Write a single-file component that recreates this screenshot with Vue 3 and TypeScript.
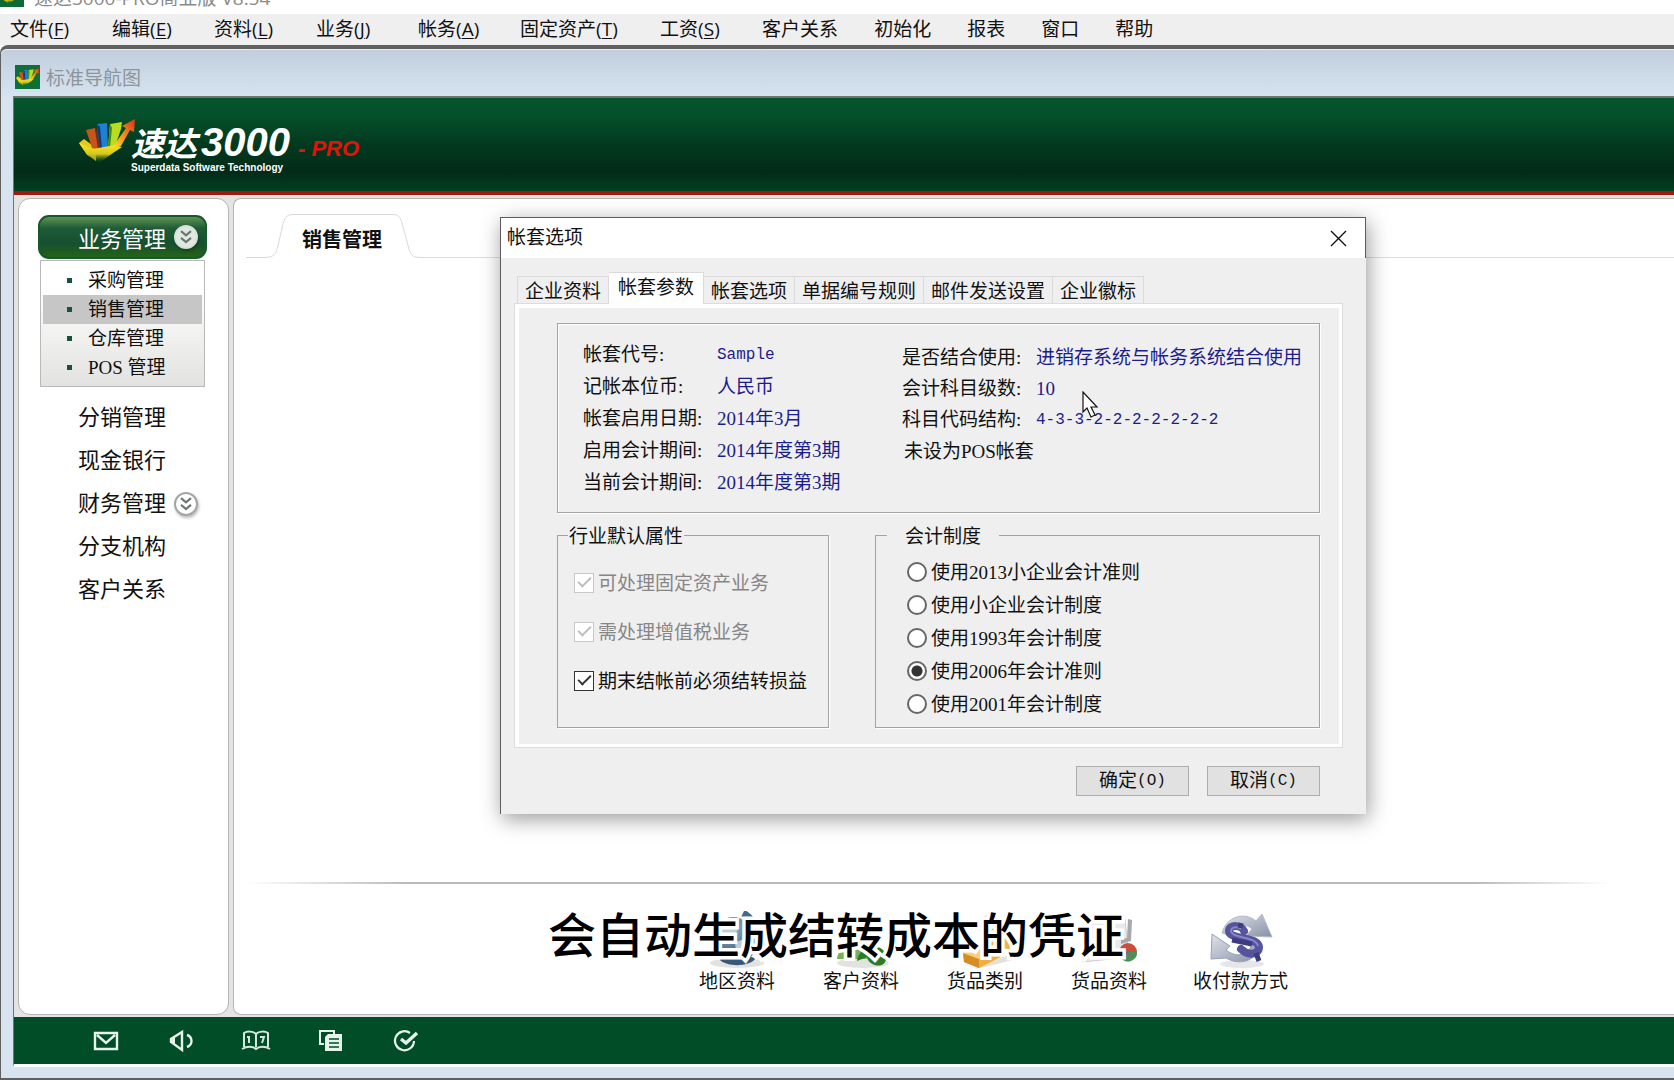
<script setup lang="ts">
import { ref } from 'vue'

interface MenuEntry { label: string; key?: string }
interface Choice { id: string; label: string; disabled?: boolean }
interface Field { label: string; value: string; mono?: boolean }

const menus: MenuEntry[] = [
  { label: '文件', key: 'F' },
  { label: '编辑', key: 'E' },
  { label: '资料', key: 'L' },
  { label: '业务', key: 'J' },
  { label: '帐务', key: 'A' },
  { label: '固定资产', key: 'T' },
  { label: '工资', key: 'S' },
  { label: '客户关系' },
  { label: '初始化' },
  { label: '报表' },
  { label: '窗口' },
  { label: '帮助' },
]

const subItems = ['采购管理', '销售管理', '仓库管理', 'POS 管理']
const activeSub = ref('销售管理')
const navItems = ['分销管理', '现金银行', '财务管理', '分支机构', '客户关系']

const tabs = ['企业资料', '帐套参数', '帐套选项', '单据编号规则', '邮件发送设置', '企业徽标']
const activeTab = ref('帐套参数')

const leftFields: Field[] = [
  { label: '帐套代号:', value: 'Sample', mono: true },
  { label: '记帐本位币:', value: '人民币' },
  { label: '帐套启用日期:', value: '2014年3月' },
  { label: '启用会计期间:', value: '2014年度第3期' },
  { label: '当前会计期间:', value: '2014年度第3期' },
]
const rightFields: Field[] = [
  { label: '是否结合使用:', value: '进销存系统与帐务系统结合使用' },
  { label: '会计科目级数:', value: '10' },
  { label: '科目代码结构:', value: '4-3-3-2-2-2-2-2-2-2', mono: true },
]

const checks: Choice[] = [
  { id: 'asset', label: '可处理固定资产业务', disabled: true },
  { id: 'vat', label: '需处理增值税业务', disabled: true },
  { id: 'carry', label: '期末结帐前必须结转损益' },
]
const checked = ref<string[]>(['asset', 'vat', 'carry'])

const systems: Choice[] = [
  { id: 's2013', label: '使用2013小企业会计准则' },
  { id: 'small', label: '使用小企业会计制度' },
  { id: 's1993', label: '使用1993年会计制度' },
  { id: 's2006', label: '使用2006年会计准则' },
  { id: 's2001', label: '使用2001年会计制度' },
]
const system = ref('s2006')
</script>

<template>
  <div class="app">
    <svg class="defs" width="0" height="0" aria-hidden="true">
      <defs>
        <linearGradient id="g-steel" x1="0" y1="0" x2="1" y2="1">
          <stop offset="0" stop-color="#dfe3ea" /><stop offset="1" stop-color="#8791a6" />
        </linearGradient>
        <linearGradient id="g-cup" x1="0" y1="0" x2="0" y2="1">
          <stop offset="0" stop-color="#f7e92a" /><stop offset=".55" stop-color="#d9c71a" /><stop offset="1" stop-color="#0c5a20" stop-opacity="0" />
        </linearGradient>
        <linearGradient id="g-arrow" x1="0" y1="1" x2="1" y2="0">
          <stop offset="0" stop-color="#f6e62a" /><stop offset=".5" stop-color="#f08a1c" /><stop offset="1" stop-color="#d8321a" />
        </linearGradient>
        <radialGradient id="g-globe" cx=".4" cy=".3" r=".8">
          <stop offset="0" stop-color="#9fbdd4" /><stop offset="1" stop-color="#2f5273" />
        </radialGradient>
        <symbol id="emblem" viewBox="0 0 56 44">
          <path d="M0 24 L5 20 L17 29 L17 42 L8 35 Z" fill="#e9c81c" />
          <path d="M7 11 L16 9 L20 31 L13 29 Z" fill="#c4561c" />
          <path d="M16 10 L19 12 L22 30 L19 31 Z" fill="#7c2c10" />
          <path d="M18 5 L28 4 L29 29 L21 30 Z" fill="#1f7fd0" />
          <path d="M18 5 L21 8 L23 30 L21 30 Z" fill="#0d3a80" />
          <path d="M31 5 L43 3 L42 10 L36 28 L29 28 Z" fill="#b9dc1e" />
          <path d="M31 5 L33 9 L31 28 L29 28 Z" fill="#3b8a1c" />
          <path d="M0 24 L14 30 L36 26 L43 28 L34 34 L20 44 L8 36 Z" fill="url(#g-cup)" />
          <path d="M33 29 L47 9 L43 7 L56 0 L55 13 L51 11 L42 27 Z" fill="url(#g-arrow)" />
        </symbol>
        <symbol id="chevrons" viewBox="0 0 24 24">
          <path d="M6 5 L12 10 L18 5 M6 13 L12 18 L18 13" fill="none" stroke="#6f7672" stroke-width="2.6" />
        </symbol>
      </defs>
    </svg>

    <header class="titlebar">
      <span class="title-icon"><svg width="22" height="20"><use href="#emblem" /></svg></span>
      <span class="title-text">速达3000-PRO商业版 V8.54</span>
    </header>

    <nav class="menubar">
      <button v-for="m in menus" :key="m.label" type="button">{{ m.label }}<span v-if="m.key" class="accel">(<u>{{ m.key }}</u>)</span></button>
    </nav>

    <section class="mdi">
      <div class="mdi-title">
        <span class="mdi-icon"><svg width="23" height="18"><use href="#emblem" /></svg></span>
        <span class="mdi-name">标准导航图</span>
      </div>

      <div class="mdi-body">
        <div class="banner">
          <svg class="logo" width="56" height="44"><use href="#emblem" /></svg>
          <div class="brand">
            <div class="brand-line">
              <span class="brand-cn">速达</span><span class="brand-num">3000</span><span class="brand-pro">- PRO</span>
            </div>
            <div class="brand-sub">Superdata Software Technology</div>
          </div>
        </div>

        <div class="workspace">
          <aside class="sidebar">
            <button type="button" class="nav-main">业务管理
              <span class="round pale"><svg width="20" height="20"><use href="#chevrons" /></svg></span>
            </button>
            <ul class="submenu">
              <li v-for="s in subItems" :key="s" :class="{ on: s === activeSub }">
                <button type="button" @click="activeSub = s">{{ s }}</button>
              </li>
            </ul>
            <ul class="nav-list">
              <li v-for="n in navItems" :key="n">
                <button type="button">{{ n }}
                  <span v-if="n === '财务管理'" class="round"><svg width="20" height="20"><use href="#chevrons" /></svg></span>
                </button>
              </li>
            </ul>
          </aside>

          <main class="stage">
            <div class="stage-tabs">
              <button type="button" class="stage-tab">
                <svg width="176" height="46" viewBox="0 0 176 46" aria-hidden="true">
                  <path d="M0 44.500 H18 C28 44.500 30 41 32 33 L37 11 C39 3 42 1.500 48 1.500 H146 C152 1.500 154 3 156 10 L163 36 C165 43 167 44.500 176 44.500" fill="none" stroke="#d9d9d9" />
                </svg>
                <span>销售管理</span>
              </button>
              <span class="stage-line"></span>
            </div>

            <div class="shortcuts-wrap">
              <hr />
              <div class="shortcuts">
                <button type="button">
                  <svg width="60" height="58" viewBox="0 0 60 58">
                    <ellipse cx="30" cy="52" rx="27" ry="5" fill="#e2e2e0" />
                    <path d="M36 2 C52 10 54 36 38 46" fill="none" stroke="#46698c" stroke-width="7" />
                    <circle cx="26" cy="25" r="19" fill="url(#g-globe)" />
                    <path d="M14 16 L24 10 L32 16 L27 26 L16 27 Z M28 31 L38 28 L36 38 L29 41 Z" fill="#b8cddd" />
                    <path d="M13 49 C20 42 40 42 48 48 C42 56 20 56 13 49 Z" fill="#375878" />
                  </svg>
                  地区资料
                </button>
                <button type="button">
                  <svg width="60" height="58" viewBox="0 0 60 58">
                    <ellipse cx="32" cy="52" rx="26" ry="5" fill="#e2e2e0" />
                    <circle cx="22" cy="20" r="11" fill="#cfe3c2" />
                    <path d="M6 48 C6 32 38 32 38 48 Z" fill="#76b259" />
                    <circle cx="42" cy="22" r="11" fill="#9fcb86" />
                    <path d="M26 50 C28 32 56 30 55 48 C54 58 38 56 36 46 Z" fill="#2f7a27" />
                  </svg>
                  客户资料
                </button>
                <button type="button">
                  <svg width="60" height="58" viewBox="0 0 60 58">
                    <path d="M18 56 L54 44 L58 49 L26 57 Z" fill="#e3e1dc" />
                    <path d="M20 10 L36 2 L34 16 L24 20 Z" fill="#f0bf62" />
                    <path d="M30 22 L44 14 L56 26 L54 42 L40 46 Z" fill="#f0b04a" />
                    <path d="M8 42 L22 32 L42 38 L46 46 L24 57 L9 51 Z" fill="#f2ae3e" />
                    <path d="M8 42 L24 48 L24 57 L9 51 Z" fill="#d88d22" />
                    <path d="M8 42 L22 32 L42 38 L24 48 Z" fill="#f9cd7c" />
                  </svg>
                  货品类别
                </button>
                <button type="button">
                  <svg width="60" height="58" viewBox="0 0 60 58">
                    <path d="M5 12 L46 8 L50 46 L4 51 Z" fill="#e9e9ec" stroke="#cccdd1" />
                    <path d="M49 8 L53 9 L52 30 L42 33 L42 28 L48 27 Z" fill="#a5a8af" />
                    <circle cx="49" cy="41" r="9" fill="#c94f3d" />
                    <path d="M49 41 L58 41 A9 9 0 0 1 44 49 Z" fill="#4c8f5c" />
                    <path d="M49 41 L44 49 A9 9 0 0 1 40 40 Z" fill="#4467a8" />
                  </svg>
                  货品资料
                </button>
                <button type="button">
                  <svg width="66" height="58" viewBox="0 0 66 58">
                    <ellipse cx="34" cy="53" rx="22" ry="4" fill="#e6e6ea" />
                    <path d="M14 22 C18 6 36 0 48 10 L54 3 L64 26 L38 25 L44 18 C36 11 26 13 22 24 Z" fill="url(#g-steel)" stroke="#b3bac8" />
                    <path d="M52 34 C50 48 34 56 18 47 L3 48 L4 23 L22 35 L18 39 C28 47 40 45 44 33 Z" fill="url(#g-steel)" stroke="#98a1b5" />
                    <path d="M36 20 C34 14 21 13 21 20 C21 29 50 25 51 36 C51 44 40 45 33 38" fill="none" stroke="#55549c" stroke-width="8" stroke-linecap="round" />
                    <path d="M33 18 C30 15 23 16 23 20 C24 28 48 25 50 35" fill="none" stroke="#8886cc" stroke-width="2" />
                    <path d="M24 29 L44 33 M33 12 L32 17 M48 42 L51 50" stroke="#3d3c82" stroke-width="5" />
                  </svg>
                  收付款方式
                </button>
              </div>
            </div>
          </main>
        </div>

        <footer class="dock">
          <button type="button" aria-label="邮件">
            <svg width="26" height="20" viewBox="0 0 26 20" fill="none" stroke="#e6f3ea" stroke-width="2.400"><path d="M2 2 H24 V18 H2 Z M4 4 L13 12 L22 4" /></svg>
          </button>
          <button type="button" aria-label="声音">
            <svg width="26" height="24" viewBox="0 0 26 24" fill="none" stroke="#e6f3ea" stroke-width="2.400"><path d="M14 3 L3 10 V13 L14 21 Z M19 6 C25 8 25 16 19 18" /><path d="M2 9 H7 V14 H2 Z" fill="#e6f3ea" stroke="none" /></svg>
          </button>
          <button type="button" aria-label="帮助手册">
            <svg width="30" height="22" viewBox="0 0 30 22" fill="none" stroke="#d5e8dc" stroke-width="2"><path d="M15 4 C12 1 6 1 3 3 V17 M15 4 C18 1 24 1 27 3 V17 M15 4 V17 M1 19 C6 16 12 16 15 19 C18 16 24 16 29 19 M8 6 V13 M6 7 H8 M19 7 H23 L21 13" /></svg>
          </button>
          <button type="button" aria-label="单据">
            <svg width="26" height="24" viewBox="0 0 26 24"><path d="M6 15 H2 V2 H16 V5" fill="none" stroke="#e6f3ea" stroke-width="2" /><path d="M7 8 L10 5 H24 V22 H7 Z" fill="#e6f3ea" /><path d="M11 10 H21 M11 14 H21 M11 18 H21" stroke="#004d28" stroke-width="1.500" /></svg>
          </button>
          <button type="button" aria-label="完成">
            <svg width="26" height="24" viewBox="0 0 26 24" fill="none" stroke="#e6f3ea"><path d="M17 4 A9.500 9.500 0 1 0 21 12" stroke-width="2.200" /><path d="M8 10 L13 14 L24 4" stroke-width="3.400" /></svg>
          </button>
        </footer>
      </div>
    </section>

    <section class="dialog" role="dialog" aria-label="帐套选项">
      <div class="dialog-title">
        <span>帐套选项</span>
        <button type="button" aria-label="关闭">
          <svg width="17" height="17" viewBox="0 0 17 17"><path d="M1 1 L16 16 M16 1 L1 16" stroke="#111" stroke-width="1.400" /></svg>
        </button>
      </div>
      <div class="dialog-tabs" role="tablist">
        <button v-for="t in tabs" :key="t" type="button" role="tab" :aria-selected="t === activeTab" :class="{ on: t === activeTab }" @click="activeTab = t">{{ t }}</button>
      </div>
      <div class="sheet">
        <div class="info">
          <dl class="fields left">
            <div v-for="f in leftFields" :key="f.label"><dt>{{ f.label }}</dt><dd :class="{ mono: f.mono }">{{ f.value }}</dd></div>
          </dl>
          <div class="right">
            <dl class="fields">
              <div v-for="f in rightFields" :key="f.label"><dt>{{ f.label }}</dt><dd :class="{ mono: f.mono }">{{ f.value }}</dd></div>
            </dl>
            <p>未设为POS帐套</p>
          </div>
        </div>
        <div class="groups">
          <fieldset class="g-checks">
            <legend>行业默认属性</legend>
            <label v-for="c in checks" :key="c.id" :class="{ off: c.disabled }">
              <input v-model="checked" type="checkbox" :value="c.id" :disabled="c.disabled" /><span>{{ c.label }}</span>
            </label>
          </fieldset>
          <fieldset class="g-radios">
            <legend>会计制度</legend>
            <label v-for="s in systems" :key="s.id">
              <input v-model="system" type="radio" name="system" :value="s.id" /><span>{{ s.label }}</span>
            </label>
          </fieldset>
        </div>
      </div>
      <div class="actions">
        <button type="button">确定<span>(O)</span></button>
        <button type="button">取消<span>(C)</span></button>
      </div>
      <svg class="pointer" width="17" height="28" viewBox="0 0 17 28" aria-hidden="true">
        <path d="M1 1 V21 L5 17 L9 26 L13 24 L9 16 H15 Z" fill="#fff" stroke="#111" stroke-width="1.200" />
      </svg>
    </section>

    <p class="caption">会自动生成结转成本的凭证</p>
  </div>
</template>

<style>
body {
  margin: 0;
  overflow: hidden;
}
</style>

<style scoped>
.app {
  position: relative;
  display: flex;
  flex-direction: column;
  min-height: 100vh;
  background: #fff;
  color: #111;
  font: 19px/24px "Liberation Serif", "Noto Sans CJK SC", sans-serif;
}
.app *,
.app *::before,
.app *::after {
  box-sizing: border-box;
}
.defs {
  position: absolute;
}
button {
  padding: 0;
  border: 0;
  background: none;
  color: inherit;
  font: inherit;
  white-space: nowrap;
}
svg {
  display: block;
  flex: none;
}
ul,
dl,
dd,
p {
  margin: 0;
  padding: 0;
  list-style: none;
}

.titlebar {
  display: flex;
  align-items: flex-end;
  gap: 10px;
  height: 14px;
  overflow: hidden;
  color: #8a8a8a;
  font-family: "Open Sans", "Noto Sans CJK SC", sans-serif;
}
.title-icon {
  padding: 2px 1px;
  margin-bottom: 7px;
  background: #0c6b35;
}
.title-text {
  margin-bottom: 4px;
}
.menubar {
  display: flex;
  gap: 36px;
  height: 31px;
  padding: 0 0 2px 10px;
  background: #efefef;
  font-family: "Open Sans", "Noto Sans CJK SC", sans-serif;
}
.accel {
  display: inline-block;
  width: 28px;
  text-align: left;
}
.accel u {
  text-underline-offset: 2px;
}

.mdi {
  display: flex;
  flex: 1;
  flex-direction: column;
  padding: 0 0 11px 12px;
  border: solid #606060;
  border-width: 4px 0 2px 1px;
  border-radius: 8px 0 0 0;
  background: #d7e4f0;
}
.mdi-title {
  display: flex;
  align-items: center;
  gap: 6px;
  height: 47px;
  margin-left: -12px;
  padding: 8px 0 0 14px;
  border-top: 1px solid #e8eef4;
  border-radius: 6px 0 0 0;
  background: linear-gradient(#c2cedb, #d5e3f0);
  color: #8d949b;
}
.mdi-icon {
  padding: 3px 1px;
  background: #0c7038;
}
.mdi-name {
  padding-top: 3px;
}
.mdi-body {
  display: flex;
  flex: 1;
  flex-direction: column;
  border: solid #6d7573;
  border-width: 2px 0 0 1px;
  border-bottom: 3px solid #fafcfd;
}
.banner {
  display: flex;
  align-items: flex-start;
  height: 97px;
  padding: 21px 0 0 65px;
  border-bottom: 4px solid #9c1a12;
  background: linear-gradient(#06552f 0%, #04502a 20%, #03391f 50%, #022b18 80%, #024022 100%);
}
.brand {
  margin-left: -4px;
  padding-top: 3px;
  color: #fff;
}
.brand-line {
  display: flex;
  align-items: baseline;
  height: 38px;
  font: italic bold 33px/40px "Liberation Sans", "Noto Sans CJK SC", sans-serif;
}
.brand-num {
  margin-left: 4px;
  font-size: 40px;
}
.brand-pro {
  margin-left: 8px;
  color: #e0140c;
  font-size: 22px;
}
.brand-sub {
  font: bold 10px/16px "Liberation Sans", sans-serif;
}

.workspace {
  display: flex;
  flex: 1;
  gap: 4px;
  padding: 3px 0 2px 4px;
  background: #e4e4e4;
}
.sidebar {
  flex: none;
  width: 211px;
  padding: 16px 21px 0 19px;
  border: 1px solid #b4b4b4;
  border-radius: 12px;
  background: #fff;
}
.nav-main {
  display: flex;
  align-items: center;
  gap: 8px;
  width: 100%;
  height: 44px;
  padding: 5px 0 0 38px;
  border: 2px solid #17582c;
  border-radius: 11px;
  background: linear-gradient(#5f9253 0%, #1f5c38 28%, #164f31 65%, #236416 100%);
  color: #fff;
  font-size: 22px;
}
.round {
  display: flex;
  align-items: center;
  justify-content: center;
  width: 24px;
  height: 24px;
  border: 2px solid #a5a5a5;
  border-radius: 50%;
  background: #fff;
  box-shadow: 1px 2px 3px #0004;
}
.round.pale {
  margin-top: -6px;
  border-color: #d6e2d8;
  background: #dfe9e1;
}
.submenu {
  margin: 1px 2px 0;
  padding: 5px 2px 4px;
  border: 1px solid #b9b9b9;
  background: linear-gradient(#fff 20%, #e2e2e0);
}
.submenu button {
  display: flex;
  align-items: center;
  width: 100%;
  height: 29px;
}
.submenu button::before {
  width: 5px;
  height: 5px;
  margin: 0 16px 0 24px;
  background: #17523a;
  content: "";
}
.submenu .on {
  background: #c6c6c6;
}
.nav-list {
  margin-top: 9px;
}
.nav-list button {
  display: flex;
  align-items: center;
  gap: 8px;
  height: 43px;
  padding-left: 40px;
  font-size: 22px;
}

.stage {
  display: flex;
  flex: 1;
  flex-direction: column;
  min-width: 0;
  padding-top: 14px;
  border: solid #b4b4b4;
  border-width: 1px 0 1px 1px;
  border-radius: 8px 0 0 8px;
  background: #fff;
}
.stage-tabs {
  display: flex;
  padding-left: 12px;
}
.stage-tab {
  position: relative;
  width: 176px;
  height: 46px;
  padding-top: 9px;
}
.stage-tab svg {
  position: absolute;
  top: 0;
  left: 0;
}
.stage-tab span {
  position: relative;
  margin-left: 16px;
  font-size: 20px;
  font-weight: bold;
}
.stage-line {
  flex: 1;
  height: 45px;
  border-bottom: 1px solid #dedede;
}
.shortcuts-wrap {
  margin-top: auto;
  height: 132px;
}
hr {
  height: 2px;
  margin: 0 64px 0 12px;
  border: 0;
  background: linear-gradient(90deg, #fff, #b9b9b9 12%, #b9b9b9 90%, #fff);
}
.shortcuts {
  display: flex;
  gap: 48px;
  padding: 27px 0 0 465px;
}
.shortcuts button {
  display: flex;
  flex-direction: column;
  gap: 1px;
  align-items: center;
}
.shortcuts button:last-child {
  margin-left: -2px;
}
.dock {
  display: flex;
  align-items: center;
  gap: 46px;
  height: 47px;
  padding-left: 77px;
  background: #004d28;
}
.dock button {
  display: flex;
  justify-content: center;
  width: 29px;
}

.dialog {
  position: absolute;
  top: 217px;
  left: 500px;
  width: 866px;
  padding-bottom: 18px;
  border: solid #5c5c5c;
  border-width: 1px 0 0 1px;
  background: #efefef;
  box-shadow: 2px 5px 20px #0006;
}
.dialog-title {
  display: flex;
  align-items: center;
  justify-content: space-between;
  height: 40px;
  padding: 0 18px 0 6px;
  border-right: 1px solid #5c5c5c;
  background: #fff;
}
.dialog-tabs {
  display: flex;
  align-items: flex-end;
  height: 46px;
  padding-left: 16px;
}
.dialog-tabs button {
  height: 28px;
  padding: 2px 7px 0;
  border: solid #dadada;
  border-width: 1px 1px 0 0;
}
.dialog-tabs button:first-child {
  border-left-width: 1px;
}
.dialog-tabs .on {
  position: relative;
  height: 32px;
  padding: 0 9px 1px;
  background: #fff;
}
.sheet {
  margin: 0 24px 0 14px;
  padding: 15px 19px 16px 38px;
  border: solid #fff;
  border-width: 4px 3px 3px 4px;
  outline: 1px solid #dcdcd8;
}
.info {
  display: flex;
  height: 190px;
  padding: 15px 0 0 25px;
  border: 1px solid #a3a3a3;
  box-shadow: 1px 1px #fff, inset 1px 1px #fff;
}
.left {
  width: 319px;
}
.fields div {
  display: flex;
  height: 32px;
  align-items: center;
}
.right {
  padding-top: 3px;
}
.right .fields div,
.right p {
  height: 31px;
}
.right p {
  padding: 5px 0 0 2px;
}
dt {
  width: 134px;
  white-space: nowrap;
}
dd {
  color: #1c1c8c;
  white-space: nowrap;
}
.mono {
  font-family: "Liberation Mono", monospace;
  font-size: 16px;
}
.groups {
  display: flex;
  gap: 46px;
  margin-top: 8px;
}
fieldset {
  min-width: 0;
  height: 207px;
  margin: 0;
  padding: 0;
  border: 1px solid #a3a3a3;
  box-shadow: 1px 1px #fff;
}
fieldset label {
  display: flex;
  align-items: center;
  gap: 4px;
  white-space: nowrap;
}
fieldset label span {
  padding-top: 2px;
}
.g-checks {
  width: 272px;
}
.g-checks legend {
  margin: 0 0 9px 10px;
  padding: 4px 1px 0;
}
.g-checks label {
  height: 49px;
  padding-left: 16px;
}
.g-checks .off {
  color: #868686;
}
.g-radios {
  flex: 1;
}
.g-radios legend {
  margin: 0 0 6px 11px;
  padding: 4px 18px 0;
}
.g-radios label {
  height: 33px;
  padding-left: 31px;
}
input {
  position: relative;
  width: 20px;
  height: 20px;
  margin: 0;
  border: 1px solid #333;
  appearance: none;
  background: #fff;
}
input[type="radio"] {
  border: 2px solid #666;
  border-radius: 50%;
}
input[type="radio"]:checked {
  background: radial-gradient(circle, #333 5px, #fff 6px);
}
input[type="checkbox"]:checked::after {
  position: absolute;
  top: 3px;
  left: 3px;
  width: 13px;
  height: 7px;
  border: solid #333;
  border-width: 0 0 2px 2px;
  content: "";
  transform: rotate(-45deg);
}
input:disabled {
  border-color: #c8c8c8;
}
input[type="checkbox"]:disabled::after {
  border-color: #bdbdbd;
}
.actions {
  display: flex;
  justify-content: flex-end;
  gap: 18px;
  padding: 19px 46px 0 0;
}
.actions button {
  display: flex;
  align-items: center;
  justify-content: center;
  width: 113px;
  height: 30px;
  border: 1px solid #adadad;
  background: #e1e1e1;
}
.actions span {
  font-family: "Liberation Mono", monospace;
  font-size: 16px;
}
.pointer {
  position: absolute;
  top: 173px;
  left: 581px;
}
.caption {
  position: absolute;
  top: 897px;
  left: 548px;
  color: #000;
  font: 500 48px/70px "Noto Sans CJK SC", sans-serif;
  paint-order: stroke;
  white-space: nowrap;
  -webkit-text-stroke: 7px #fff;
}
</style>
